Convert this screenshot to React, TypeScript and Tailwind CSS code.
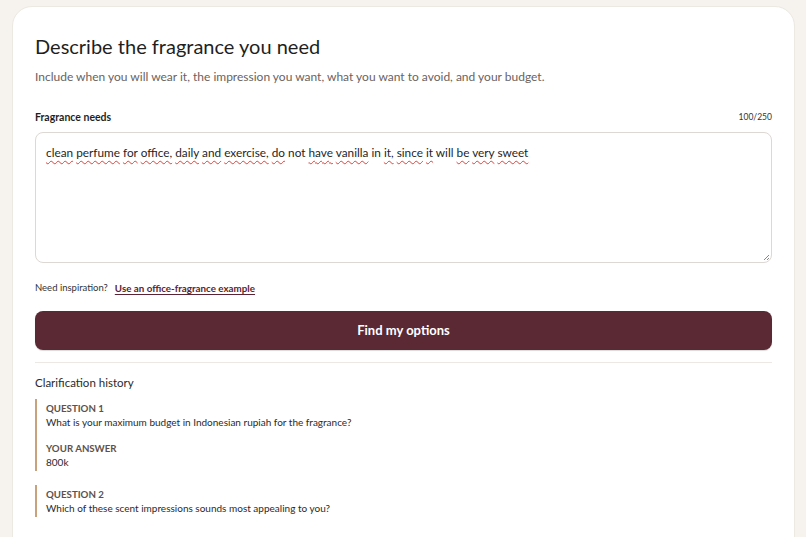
import React from "react";

const words: [string, boolean][] = [
  ["clean", true], ["perfume", true], ["for", true], ["office,", true], ["daily", true], ["and", true],
  ["exercise,", true], ["do", true], ["not", false], ["have", true], ["vanilla", true], ["in", false],
  ["it,", true], ["since", true], ["it", true], ["will", false], ["be", true], ["very", true], ["sweet", true],
];

export default function App() {
  return (
    <div
      className="min-h-[537px] bg-[#f6f3ee] pt-[6px] pl-[12px] pr-[11px] overflow-hidden"
      style={{ fontFamily: 'Lato, "Noto Sans", sans-serif' }}
    >
      <div className="bg-white rounded-t-[20px] border border-[#ece8e2] px-[22px] pt-[25px] pb-[40px] text-[#222]">
        <h1 className="text-[20px] leading-[28px] font-normal text-[#1f1f1f]">Describe the fragrance you need</h1>
        <p className="mt-[8px] text-[12px] leading-[18px] text-[#6b625e]">
          Include when you will wear it, the impression you want, what you want to avoid, and your budget.
        </p>
        <div className="mt-[24px] h-[14px] flex justify-between items-center leading-[14px]">
          <span className="text-[10.5px] font-bold text-[#1f1f1f]">Fragrance needs</span>
          <span className="text-[8.5px] text-[#333]">100/250</span>
        </div>
        <div className="relative mt-[8px] h-[131px] rounded-[8px] border border-[#dcd8d3] bg-white px-[10px] pt-[11px] text-[11.8px] leading-[18px] text-[#1f1f1f]">
          {words.map(([w, u], i) => (
            <React.Fragment key={i}>
              <span className={u ? "underline decoration-wavy decoration-[#e0413a] decoration-[1px] underline-offset-[3px]" : ""}>{w}</span>
              {i < words.length - 1 ? " " : ""}
            </React.Fragment>
          ))}
          <svg className="absolute right-[1px] bottom-[1px]" width="8" height="8" viewBox="0 0 8 8">
            <path d="M7 2 L2 7 M7 5 L5 7" stroke="#888" strokeWidth="1" />
          </svg>
        </div>
        <div className="mt-[18px] h-[14px] leading-[14px] text-[#333] flex items-center">
          <span className="text-[9.5px]">Need inspiration?</span>
          <span className="ml-[7px] text-[9.8px] font-bold text-[#5a2432] underline underline-offset-2">Use an office-fragrance example</span>
        </div>
        <button className="mt-[16px] w-full h-[39px] rounded-[8px] bg-[#5b2934] text-white font-bold text-[13px] shadow-[0_1px_1px_rgba(0,0,0,0.15)]">
          Find my options
        </button>
        <div className="mt-[12px] h-px bg-[#ece9e5]" />
        <div className="mt-[11px] text-[11.5px] leading-[18px] text-[#2a2a2a]">Clarification history</div>
        <div className="mt-[7px] border-l-2 border-[#c9a27c] pl-[9px] pt-[2px] pb-[2px]">
          <div className="text-[9.7px] leading-[14px] font-bold text-[#5e514a]">QUESTION 1</div>
          <div className="text-[10px] leading-[14px] text-[#2a2a2a]">What is your maximum budget in Indonesian rupiah for the fragrance?</div>
          <div className="mt-[12px] text-[9.7px] leading-[14px] font-bold text-[#5e514a]">YOUR ANSWER</div>
          <div className="text-[10px] leading-[14px] text-[#2a2a2a]">800k</div>
        </div>
        <div className="mt-[14px] border-l-2 border-[#c9a27c] pl-[9px] pt-[2px] pb-[2px]">
          <div className="text-[9.7px] leading-[14px] font-bold text-[#5e514a]">QUESTION 2</div>
          <div className="text-[10px] leading-[14px] text-[#2a2a2a]">Which of these scent impressions sounds most appealing to you?</div>
        </div>
      </div>
    </div>
  );
}
